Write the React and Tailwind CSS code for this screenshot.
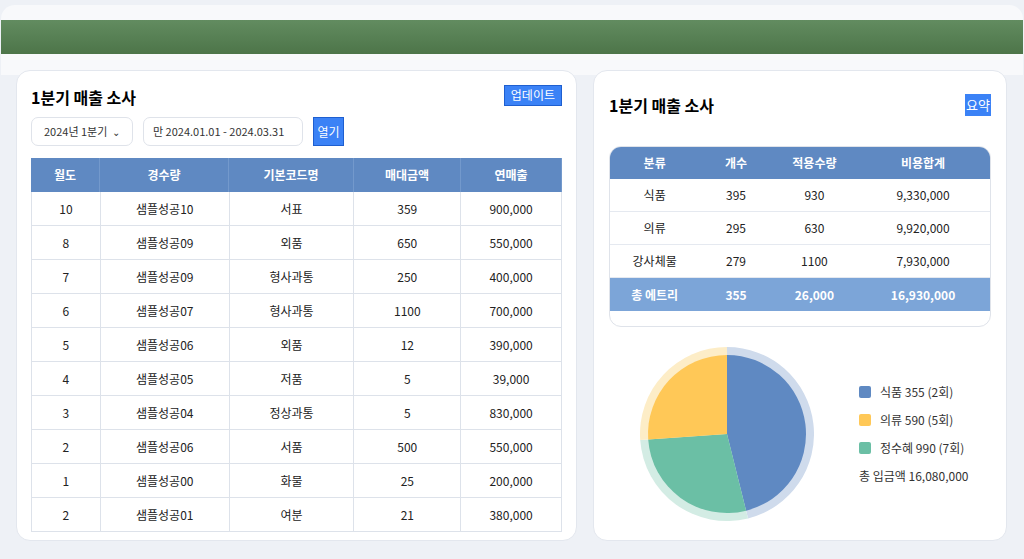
import React from "react";

const rows = [
  ["10","샘플성공10","서표","359","900,000"],
  ["8","샘플성공09","외품","650","550,000"],
  ["7","샘플성공09","형사과통","250","400,000"],
  ["6","샘플성공07","형사과통","1100","700,000"],
  ["5","샘플성공06","외품","12","390,000"],
  ["4","샘플성공05","저품","5","39,000"],
  ["3","샘플성공04","정상과통","5","830,000"],
  ["2","샘플성공06","서품","500","550,000"],
  ["1","샘플성공00","화물","25","200,000"],
  ["2","샘플성공01","여분","21","380,000"],
];
const widths = ["w-[69px]","w-[129px]","w-[125px]","w-[107px]","w-[101px]"];

function pt(a, r) {
  const rad = (a - 90) * Math.PI / 180;
  return [87 + r * Math.cos(rad), 87 + r * Math.sin(rad)];
}
function slice(a0, a1, r) {
  const [x0, y0] = pt(a0, r), [x1, y1] = pt(a1, r);
  const large = a1 - a0 > 180 ? 1 : 0;
  return `M87 87 L${x0} ${y0} A${r} ${r} 0 ${large} 1 ${x1} ${y1} Z`;
}
const segs = [[0,166,"#5f89c2","#cfdbec"],[166,266,"#6bbfa5","#d3ece4"],[266,360,"#ffc857","#fdedc7"]];

export default function App() {
  return (
    <div className="w-[1024px] h-[559px] bg-[#eef1f6] overflow-hidden" style={{fontFamily:'"Noto Sans CJK KR","Noto Sans",sans-serif'}}>
      <div className="mt-[5px] mx-[1px] h-[70px] rounded-t-[14px] bg-[#f8f9fb] pt-[15px]">
        <div className="h-[34px] bg-gradient-to-b from-[#628c60] to-[#4d7549]"></div>
      </div>
      <div className="flex gap-4 px-4 -mt-[5px]">
        <div className="w-[561px] h-[471px] bg-white rounded-[14px] border border-[#e3e7ee] px-[14px] pt-[14px]">
          <div className="flex items-center justify-between h-[24px]">
            <h1 className="text-[16px] font-bold text-black">1분기 매출 소사</h1>
            <button className="bg-[#3b82f6] text-white text-[12px] px-[6px] h-[21px] border border-[#1e5fd0] mt-[-4px]">업데이트</button>
          </div>
          <div className="flex items-center gap-[10px] mt-[8px]">
            <div className="w-[102px] h-[29px] border border-[#dfe3ea] rounded-[7px] flex items-center justify-between px-3 text-[11px] text-[#333]">
              <span>2024년 1분기</span><span className="text-[10px]">⌄</span>
            </div>
            <div className="w-[160px] h-[29px] border border-[#dfe3ea] rounded-[7px] flex items-center px-[9px] text-[11px] text-[#333]">만 2024.01.01 - 2024.03.31</div>
            <button className="bg-[#3b82f6] text-white text-[12px] w-[31px] h-[29px] border border-[#1e5fd0]">열기</button>
          </div>
          <div className="mt-[12px] border-l-[3px] border-[#3d4f6a] w-[531px]">
            <div className="flex bg-[#5f89c2] h-[34px] text-white text-[12px] font-bold -ml-[3px]">
              {["월도","경수량","기본코드명","매대금액","연매출"].map((h,i)=>(
                <div key={i} className={`${widths[i]} flex items-center justify-center border-r border-[#7399cc]`}>{h}</div>
              ))}
            </div>
          </div>
          <div className="w-[531px] border-l border-[#dde2ea]">
            {rows.map((r,i)=>(
              <div key={i} className="flex h-[34px] border-b border-[#dde2ea] text-[12px] text-[#222]">
                {r.map((c,j)=>(
                  <div key={j} className={`${widths[j]} flex items-center justify-center border-r border-[#dde2ea]`}>{c}</div>
                ))}
              </div>
            ))}
          </div>
        </div>
        <div className="w-[414px] h-[471px] bg-white rounded-[14px] border border-[#e3e7ee] px-[15px] pt-[22px]">
          <div className="flex items-center justify-between h-[24px]">
            <h1 className="text-[16px] font-bold text-black">1분기 매출 소사</h1>
            <span className="bg-[#3b82f6] text-white text-[13px] px-[1px] h-[22px] flex items-center">요약</span>
          </div>
          <div className="mt-[29px] border border-[#dfe3ea] rounded-[12px] overflow-hidden h-[181px]">
            <div className="flex bg-[#5f89c2] h-[32px] text-white text-[12px] font-bold">
              {["분류","개수","적용수량","비용합계"].map((h,i)=>(
                <div key={i} className={`${["w-[90px]","w-[74px]","w-[84px]","w-[135px]"][i]} flex items-center justify-center`}>{h}</div>
              ))}
            </div>
            {[["식품","395","930","9,330,000"],["의류","295","630","9,920,000"],["강사체물","279","1100","7,930,000"]].map((r,i)=>(
              <div key={i} className="flex h-[33px] border-b border-[#e5e9f0] text-[12px] text-[#222]">
                {r.map((c,j)=>(<div key={j} className={`${["w-[90px]","w-[74px]","w-[84px]","w-[135px]"][j]} flex items-center justify-center`}>{c}</div>))}
              </div>
            ))}
            <div className="flex h-[33px] bg-[#7ca5d8] text-white text-[12px] font-bold">
              {["총 에트리","355","26,000","16,930,000"].map((c,j)=>(<div key={j} className={`${["w-[90px]","w-[74px]","w-[84px]","w-[135px]"][j]} flex items-center justify-center`}>{c}</div>))}
            </div>
          </div>
          <div className="flex items-center mt-[20px] ml-[31px]">
            <svg width="174" height="174" viewBox="0 0 174 174">
              {segs.map((s,i)=>(<path key={"o"+i} d={slice(s[0],s[1],87)} fill={s[3]} />))}
              {segs.map((s,i)=>(<path key={"i"+i} d={slice(s[0],s[1],79)} fill={s[2]} />))}
            </svg>
            <div className="ml-[45px] text-[12px] text-[#333] flex flex-col gap-[10px]">
              {[["#5f89c2","식품 355 (2회)"],["#ffc857","의류 590 (5회)"],["#6bbfa5","정수혜 990 (7회)"]].map(([c,t],i)=>(
                <div key={i} className="flex items-center gap-[9px] h-[18px]"><span className="w-[12px] h-[12px] rounded-[2px]" style={{background:c}}></span>{t}</div>
              ))}
              <div className="h-[18px] flex items-center">총 입금액 16,080,000</div>
            </div>
          </div>
        </div>
      </div>
    </div>
  );
}
